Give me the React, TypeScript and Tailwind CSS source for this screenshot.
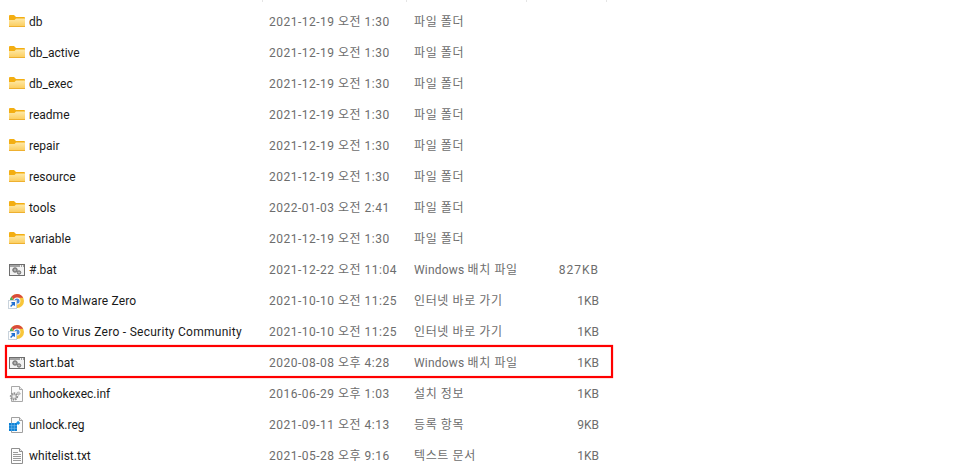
import React from "react";

const Folder = () => (
  <svg width="17" height="16" viewBox="0 0 17 16" className="block">
    <defs>
      <linearGradient id="fb" x1="0" y1="0" x2="0" y2="1">
        <stop offset="0" stopColor="#fee9a8" />
        <stop offset="1" stopColor="#fbcb58" />
      </linearGradient>
    </defs>
    <path d="M1 2 Q1 1 2 1 H6 L8 3 H16 Q17 3 17 4 V6 H1 Z" fill="#f3ae12" />
    <path d="M1 6 H6.5 L8 4.5 H17 V12.5 Q17 13 16.5 13 H1.5 Q1 13 1 12.5 Z" fill="url(#fb)" />
    <rect x="1" y="12" width="16" height="1" fill="#eeb030" />
  </svg>
);

const Bat = () => (
  <svg width="17" height="16" viewBox="0 0 17 16" className="block">
    <rect x="1.5" y="2.5" width="15" height="11" fill="#f2f2f2" stroke="#6d6d6d" />
    <rect x="2" y="3" width="10" height="2" fill="#a3a3a3" />
    <rect x="13" y="3" width="1" height="2" fill="#a3a3a3" />
    <rect x="15" y="3" width="1" height="2" fill="#a3a3a3" />
    <circle cx="7" cy="8" r="2.3" fill="#8f8f8f" stroke="#666" strokeWidth="0.8" />
    <circle cx="7" cy="8" r="0.7" fill="#e8e8e8" />
    <circle cx="11" cy="10.5" r="1.8" fill="#9c9c9c" stroke="#6b6b6b" strokeWidth="0.8" />
    <circle cx="11" cy="10.5" r="0.5" fill="#e8e8e8" />
  </svg>
);

const Chrome = () => (
  <svg width="17" height="16" viewBox="0 0 17 16" className="block">
    <circle cx="9" cy="8" r="7" fill="#f8c63a" />
    <path d="M9 1 A7 7 0 0 1 15.2 4.8 H9 A3.2 3.2 0 0 0 6 6.8 L3.5 3.6 A7 7 0 0 1 9 1 Z" fill="#d94a3d" />
    <path d="M3.5 3.6 L6.6 9.5 L9.4 15 A7 7 0 0 1 3.5 3.6 Z" fill="#4aa95c" />
    <circle cx="9" cy="8" r="3.4" fill="#ffffff" />
    <circle cx="9" cy="8" r="2.6" fill="#4a89dc" />
    <rect x="0.5" y="7.5" width="8" height="8" fill="#fdfdfd" stroke="#c9d3dc" strokeWidth="1" />
    <path d="M2.6 13.5 L6 10.1 M3.4 9.8 H6.3 V12.7" fill="none" stroke="#1f6fd1" strokeWidth="1.4" />
  </svg>
);

const Inf = () => (
  <svg width="17" height="16" viewBox="0 0 17 16" className="block">
    <path d="M3.5 0.5 H11.5 L14.5 3.5 V15.5 H3.5 Z" fill="#fbfbfb" stroke="#a8a8a8" />
    <path d="M11.5 0.5 V3.5 H14.5" fill="#e8e8e8" stroke="#a8a8a8" />
    <circle cx="6" cy="10.5" r="3.2" fill="#c2c2c2" stroke="#8f8f8f" strokeWidth="2" strokeDasharray="1.4 1" />
    <circle cx="6" cy="10.5" r="1.2" fill="#f4f4f4" />
    <circle cx="10.5" cy="7.5" r="1.6" fill="#c9c9c9" stroke="#a0a0a0" strokeWidth="1" strokeDasharray="1 0.7" />
  </svg>
);

const Reg = () => (
  <svg width="17" height="16" viewBox="0 0 17 16" className="block">
    <path d="M3.5 0.5 H11.5 L14.5 3.5 V15.5 H3.5 Z" fill="#fbfbfb" stroke="#a0a0a0" />
    <path d="M11.5 0.5 V3.5 H14.5" fill="#e8e8e8" stroke="#a0a0a0" />
    <rect x="1" y="6" width="8" height="8" fill="#0a7fd4" />
    <path d="M3.7 6 V14 M6.3 6 V14 M1 8.7 H9 M1 11.3 H9" stroke="#7cc0ee" strokeWidth="0.6" />
    <rect x="8.6" y="4.4" width="3" height="3" fill="#1a92e4" transform="rotate(45 10.1 5.9)" />
  </svg>
);

const Txt = () => (
  <svg width="17" height="16" viewBox="0 0 17 16" className="block">
    <path d="M3.5 0.5 H11.5 L14.5 3.5 V15.5 H3.5 Z" fill="#fdfdfd" stroke="#8f8f8f" />
    <path d="M11.5 0.5 V3.5 H14.5" fill="#e8e8e8" stroke="#8f8f8f" />
    <path d="M5 4.5 H10 M5 6.5 H13 M5 8.5 H13 M5 10.5 H13 M5 12.5 H13" stroke="#9a9a9a" strokeWidth="1" />
  </svg>
);

const F = "파일 폴더";
const B = "배치 파일";
const S = "인터넷 바로 가기";

type Row = {
  Icon: React.FC;
  name: string;
  date: string;
  prefix: string;
  type: string;
  size: string;
  nameClass?: string;
  sizeClass?: string;
  hl?: boolean;
};

const rows: Row[] = [
  { Icon: Folder, name: "db", date: "2021-12-19 오전 1:30", prefix: "", type: F, size: "" },
  { Icon: Folder, name: "db_active", date: "2021-12-19 오전 1:30", prefix: "", type: F, size: "" },
  { Icon: Folder, name: "db_exec", date: "2021-12-19 오전 1:30", prefix: "", type: F, size: "" },
  { Icon: Folder, name: "readme", date: "2021-12-19 오전 1:30", prefix: "", type: F, size: "" },
  { Icon: Folder, name: "repair", date: "2021-12-19 오전 1:30", prefix: "", type: F, size: "" },
  { Icon: Folder, name: "resource", date: "2021-12-19 오전 1:30", prefix: "", type: F, size: "" },
  { Icon: Folder, name: "tools", date: "2022-01-03 오전 2:41", prefix: "", type: F, size: "" },
  { Icon: Folder, name: "variable", date: "2021-12-19 오전 1:30", prefix: "", type: F, size: "" },
  { Icon: Bat, name: "#.bat", date: "2021-12-22 오전 11:04", prefix: "Windows ", type: B, size: "827KB", sizeClass: "tracking-[1px]" },
  { Icon: Chrome, name: "Go to Malware Zero", date: "2021-10-10 오전 11:25", prefix: "", type: S, size: "1KB", nameClass: "tracking-[0.15px]" },
  { Icon: Chrome, name: "Go to Virus Zero - Security Community", date: "2021-10-10 오전 11:25", prefix: "", type: S, size: "1KB", nameClass: "tracking-[0.27px]" },
  { Icon: Bat, name: "start.bat", date: "2020-08-08 오후 4:28", prefix: "Windows ", type: B, size: "1KB", hl: true },
  { Icon: Inf, name: "unhookexec.inf", date: "2016-06-29 오후 1:03", prefix: "", type: "설치 정보", size: "1KB" },
  { Icon: Reg, name: "unlock.reg", date: "2021-09-11 오전 4:13", prefix: "", type: "등록 항목", size: "9KB" },
  { Icon: Txt, name: "whitelist.txt", date: "2021-05-28 오후 9:16", prefix: "", type: "텍스트 문서", size: "1KB" },
];

export default function App() {
  return (
    <div
      className="relative h-[476px] w-[969px] overflow-hidden bg-white text-[12px] leading-[16px]"
      style={{ fontFamily: 'Roboto, "Noto Sans CJK KR", sans-serif' }}
    >
      <div className="flex h-[6px] w-[607px] items-start">
        <div className="h-[2px] w-[263px] border-r border-[#e5e5e5]" />
        <div className="h-[2px] w-[144px] border-r border-[#e5e5e5]" />
        <div className="h-[2px] w-[120px] border-r border-[#e5e5e5]" />
        <div className="h-[2px] w-[80px] border-r border-[#e5e5e5]" />
      </div>
      {rows.map(({ Icon, name, date, prefix, type, size, nameClass, sizeClass, hl }) => (
        <div key={name} className="relative flex h-[31px] w-[607px] items-center">
          <div className="ml-[8px] w-[21px] shrink-0">
            <Icon />
          </div>
          <div className={`w-[240px] shrink-0 whitespace-nowrap text-[#1a1a1a] ${nameClass ?? ""}`}>{name}</div>
          <div className="w-[145px] shrink-0 whitespace-nowrap tracking-[0.5px] text-[#6d6d6d]">{date}</div>
          <div className="w-[125px] shrink-0 whitespace-pre tracking-[0.2px] text-[#6d6d6d]">
            {prefix}
            <span className="tracking-[0.6px]">{type}</span>
          </div>
          <div className={`w-[60px] shrink-0 whitespace-nowrap text-right text-[#6d6d6d] ${sizeClass ?? ""}`}>{size}</div>
          {hl && (
            <div className="absolute left-[5px] top-[-2px] h-[33px] w-[608px] border-2 border-[#ff0000] shadow-[0_0_1px_#ff4040,inset_0_0_1px_#ff4040]" />
          )}
        </div>
      ))}
    </div>
  );
}
